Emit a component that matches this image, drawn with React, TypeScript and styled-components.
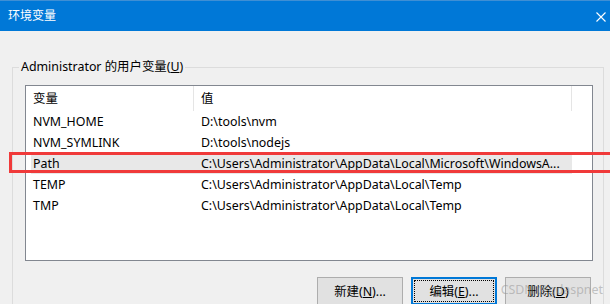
import styled, { createGlobalStyle } from "styled-components";

const GlobalStyle = createGlobalStyle`
  html, body {
    margin: 0;
    padding: 0;
    background: #f0f0f0;
    overflow: hidden;
  }
  body {
    font-family: "Noto Sans", "Noto Sans CJK SC", sans-serif;
    font-size: 12px;
    color: #000000;
  }
`;

const rows = [
  { name: "NVM_HOME", value: "D:\\tools\\nvm" },
  { name: "NVM_SYMLINK", value: "D:\\tools\\nodejs" },
  {
    name: "Path",
    value: "C:\\Users\\Administrator\\AppData\\Local\\Microsoft\\WindowsA...",
    selected: true,
  },
  { name: "TEMP", value: "C:\\Users\\Administrator\\AppData\\Local\\Temp" },
  { name: "TMP", value: "C:\\Users\\Administrator\\AppData\\Local\\Temp" },
];

const App = () => {
  return (
    <Window>
      <GlobalStyle />
      <TitleBar>
        <TitleText>环境变量</TitleText>
        <CloseButton>
          <svg width="10" height="10" viewBox="0 0 10 10">
            <path d="M0.5 0.5 L9.5 9.5 M9.5 0.5 L0.5 9.5" stroke="#ffffff" strokeWidth="1.1" />
          </svg>
        </CloseButton>
      </TitleBar>
      <Body>
        <Group>
          <Legend>
            Administrator 的用户变量(<u>U</u>)
          </Legend>
          <ListBox>
            <HeaderRow>
              <HeaderCell>变量</HeaderCell>
              <HeaderCell>值</HeaderCell>
            </HeaderRow>
            {rows.map((r) => (
              <Row key={r.name} $selected={!!r.selected}>
                <NameCell>{r.name}</NameCell>
                <ValueCell>{r.value}</ValueCell>
                {r.selected && <Marker />}
              </Row>
            ))}
          </ListBox>
          <Buttons>
            <Button>
              新建(<u>N</u>)...
            </Button>
            <Button $focused>
              编辑(<u>E</u>)...
            </Button>
            <Button>
              删除(<u>D</u>)
            </Button>
          </Buttons>
        </Group>
      </Body>
      <Watermark>CSDN @gdaspnet</Watermark>
    </Window>
  );
};

export default App;

const Window = styled.div`
  position: relative;
  width: 610px;
  height: 304px;
  display: flex;
  flex-direction: column;
  background: #f0f0f0;
  overflow: hidden;
`;

const TitleBar = styled.div`
  height: 31px;
  flex-shrink: 0;
  background: #0078d7;
  border-top: 1px solid #3f8fd4;
  box-sizing: border-box;
  display: flex;
  align-items: center;
  justify-content: space-between;
  padding: 0 4px 0 8px;
`;

const TitleText = styled.span`
  color: #ffffff;
  font-size: 12px;
  line-height: 16px;
`;

const CloseButton = styled.div`
  width: 10px;
  height: 10px;
  display: flex;
  margin-top: 1px;
`;

const Body = styled.div`
  padding: 28px 6px 0 12px;
`;

const Group = styled.fieldset`
  margin: 0;
  min-width: 0;
  border: 1px solid #dcdcdc;
  padding: 10px 10px 20px 12px;
`;

const Legend = styled.legend`
  padding: 0 2px;
  margin-left: -6px;
  font-size: 12.4px;
  line-height: 16px;
`;

const ListBox = styled.div`
  box-sizing: border-box;
  height: 176px;
  border: 1px solid #828790;
  background: #ffffff;
  font-size: 12.4px;
`;

const HeaderRow = styled.div`
  display: grid;
  grid-template-columns: 168px 378px;
  height: 25px;
`;

const HeaderCell = styled.div`
  display: flex;
  align-items: center;
  padding-left: 7px;
  border-right: 1px solid #e5e5e5;
  line-height: 16px;
`;

const Row = styled.div<{ $selected: boolean }>`
  position: relative;
  margin-left: 5px;
  width: 541px;
  height: 21px;
  display: grid;
  grid-template-columns: 163px 378px;
  align-items: center;
  background: ${(p) => (p.$selected ? "#e8e8e8" : "transparent")};
`;

const NameCell = styled.div`
  padding-left: 2px;
  white-space: nowrap;
  line-height: 16px;
`;

const ValueCell = styled.div`
  padding-left: 7px;
  white-space: nowrap;
  overflow: hidden;
  line-height: 16px;
`;

const Marker = styled.div`
  position: absolute;
  top: -1px;
  left: -22px;
  right: -60px;
  height: 21px;
  box-sizing: border-box;
  border: 3px solid #f03a3a;
`;

const Buttons = styled.div`
  display: flex;
  justify-content: flex-end;
  gap: 8px;
  margin: 16px 2px 0 0;
`;

const Button = styled.button<{ $focused?: boolean }>`
  width: 86px;
  height: 28px;
  box-sizing: border-box;
  background: #e1e1e1;
  border: 1px solid ${(p) => (p.$focused ? "#0078d7" : "#adadad")};
  box-shadow: ${(p) => (p.$focused ? "inset 0 0 0 1px #0078d7" : "none")};
  outline: ${(p) => (p.$focused ? "1px dotted #000000" : "none")};
  outline-offset: -4px;
  font-family: inherit;
  font-size: 12.4px;
  color: #000000;
  padding: 0;
`;

const Watermark = styled.div`
  position: absolute;
  right: 7px;
  top: 282px;
  font-size: 12.4px;
  line-height: 16px;
  color: rgba(150, 150, 150, 0.55);
  pointer-events: none;
`;
